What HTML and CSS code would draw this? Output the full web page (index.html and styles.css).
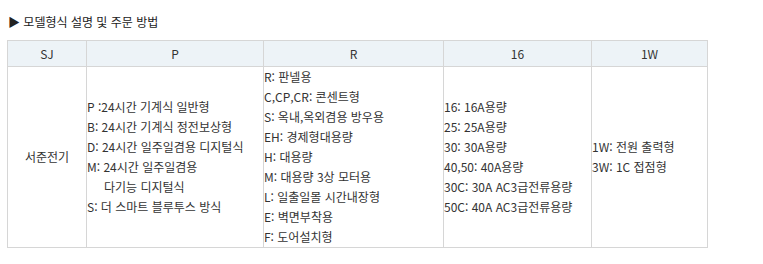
FILE: index.html
```html
<!DOCTYPE html>
<html lang="ko">
<head>
<meta charset="utf-8">
<link rel="stylesheet" href="styles.css">
</head>
<body>
<div class="page">
  <h3 class="title">▶ 모델형식 설명 및 주문 방법</h3>
  <table class="spec">
    <colgroup>
      <col class="c1"><col class="c2"><col class="c3"><col class="c4"><col class="c5">
    </colgroup>
    <thead>
      <tr><th>SJ</th><th>P</th><th>R</th><th>16</th><th>1W</th></tr>
    </thead>
    <tbody>
      <tr>
        <td class="center">서준전기</td>
        <td>P :24시간 기계식 일반형<br>B: 24시간 기계식 정전보상형<br>D: 24시간 일주일겸용 디지털식<br>M: 24시간 일주일겸용<br><span class="indent">다기능 디지털식</span><br>S: 더 스마트 블루투스 방식</td>
        <td>R: 판넬용<br>C,CP,CR: 콘센트형<br>S: 옥내,옥외겸용 방우용<br>EH: 경제형대용량<br>H: 대용량<br>M: 대용량 3상 모터용<br>L: 일출일몰 시간내장형<br>E: 벽면부착용<br>F: 도어설치형</td>
        <td>16: 16A용량<br>25: 25A용량<br>30: 30A용량<br>40,50: 40A용량<br>30C: 30A AC3급전류용량<br>50C: 40A AC3급전류용량</td>
        <td>1W: 전원 출력형<br>3W: 1C 접점형</td>
      </tr>
    </tbody>
  </table>
</div>
</body>
</html>
```
FILE: styles.css
```css
html, body {
  margin: 0;
  padding: 0;
  background: #fff;
}
body {
  font-family: "Noto Sans CJK KR", "Noto Sans", sans-serif;
  font-size: 12px;
  color: #333;
}
.page {
  padding: 13px 0 0 7px;
}
.title {
  margin: 0 0 9px 1px;
  font-size: 12px;
  font-weight: normal;
  line-height: 18px;
  color: #222;
}
.spec {
  border-collapse: collapse;
  table-layout: fixed;
  width: 700px;
}
.c1 { width: 79px; }
.c2 { width: 177px; }
.c3 { width: 180px; }
.c4 { width: 148px; }
.c5 { width: 116px; }
.spec th, .spec td {
  border: 1px solid #d6d6d6;
  padding: 0;
  line-height: 20px;
  vertical-align: middle;
  text-align: left;
  font-weight: normal;
}
.spec th {
  background: #edf3f7;
  height: 25px;
  text-align: center;
  color: #333;
}
.spec td.center {
  text-align: center;
}
.indent {
  padding-left: 17px;
}
```
